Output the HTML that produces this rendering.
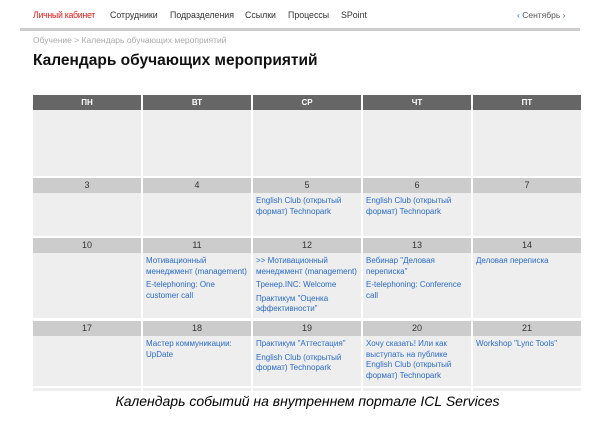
<!DOCTYPE html><html><head><meta charset="utf-8"><style>
body{margin:0;width:615px;height:430px;background:#fff;font-family:"Liberation Sans",sans-serif;position:relative;overflow:hidden}
.a{position:absolute}
.nav{top:10px;font-size:8.8px;color:#333}
.c{position:absolute;background:#eee}
.h{position:absolute;background:#ccc;font-size:9px;color:#333;text-align:center;line-height:15px}
.d{position:absolute;background:#666;color:#fff;font-size:8px;font-weight:bold;text-align:center;line-height:15px}
.e{position:absolute;font-size:8px;color:#2a6bc8;line-height:10.5px}
.e p{margin:0 0 3px}
</style></head><body>
<div class="a nav" style="left:33px;color:#e0201c;letter-spacing:-0.3px">Личный кабинет</div>
<div class="a nav" style="left:110px">Сотрудники</div>
<div class="a nav" style="left:170px">Подразделения</div>
<div class="a nav" style="left:245px">Ссылки</div>
<div class="a nav" style="left:288px">Процессы</div>
<div class="a nav" style="left:341px">SPoint</div>
<div class="a nav" style="left:517px;font-size:8.5px;color:#555"><span style="color:#2a6bc8">‹</span> Сентябрь <span style="color:#2a6bc8">›</span></div>
<div class="a" style="left:20px;top:28px;width:560px;height:3px;background:#ccc"></div>
<div class="a" style="left:33px;top:35px;font-size:8.5px;color:#aaa">Обучение &gt; Календарь обучающих мероприятий</div>
<div class="a" style="left:33px;top:52px;font-size:15.5px;font-weight:bold;color:#111;font-family:'Liberation Sans',sans-serif">Календарь обучающих мероприятий</div>
<div id="g"></div>
<div class="a" style="left:0;top:393px;width:615px;text-align:center;font-size:14px;font-style:italic;color:#000">Календарь событий на внутреннем портале ICL Services</div>
<script>
var X=[33,143,253,363,473],W=[108,108,108,108,108];
var h='';var days=['ПН','ВТ','СР','ЧТ','ПТ'];
for(var i=0;i<5;i++){h+='<div class="d" style="left:'+X[i]+'px;top:95px;width:'+W[i]+'px;height:15px">'+days[i]+'</div>';
h+='<div class="c" style="left:'+X[i]+'px;top:110px;width:'+W[i]+'px;height:66px"></div>';}
var rows=[[178,43,[3,4,5,6,7]],[238,65,[10,11,12,13,14]],[321,50,[17,18,19,20,21]]];
rows.forEach(function(r){for(var i=0;i<5;i++){h+='<div class="h" style="left:'+X[i]+'px;top:'+r[0]+'px;width:'+W[i]+'px;height:15px">'+r[2][i]+'</div>';
h+='<div class="c" style="left:'+X[i]+'px;top:'+(r[0]+15)+'px;width:'+W[i]+'px;height:'+r[1]+'px"></div>';}});
for(var i=0;i<5;i++)h+='<div class="c" style="left:'+X[i]+'px;top:388px;width:'+W[i]+'px;height:3px"></div>';
var ev=[[2,196,'<p>English Club (открытый формат) Technopark</p>'],[3,196,'<p>English Club (открытый формат) Technopark</p>'],
[1,256,'<p>Мотивационный менеджмент (management)</p><p>E-telephoning: One customer call</p>'],
[2,256,'<p>&gt;&gt; Мотивационный менеджмент (management)</p><p>Тренер.INC: Welcome</p><p>Практикум "Оценка эффективности"</p>'],
[3,256,'<p>Вебинар "Деловая переписка"</p><p>E-telephoning: Conference call</p>'],
[4,256,'<p>Деловая переписка</p>'],
[1,339,'<p>Мастер коммуникации: UpDate</p>'],
[2,339,'<p>Практикум "Аттестация"</p><p>English Club (открытый формат) Technopark</p>'],
[3,339,'<p style="margin:0">Хочу сказать! Или как выступать на публике</p><p>English Club (открытый формат) Technopark</p>'],
[4,339,'<p>Workshop "Lync Tools"</p>']];
ev.forEach(function(e){h+='<div class="e" style="left:'+(X[e[0]]+3)+'px;top:'+e[1]+'px;width:'+(W[e[0]]-4)+'px">'+e[2]+'</div>';});
document.getElementById('g').innerHTML=h;
</script>
</body></html>
